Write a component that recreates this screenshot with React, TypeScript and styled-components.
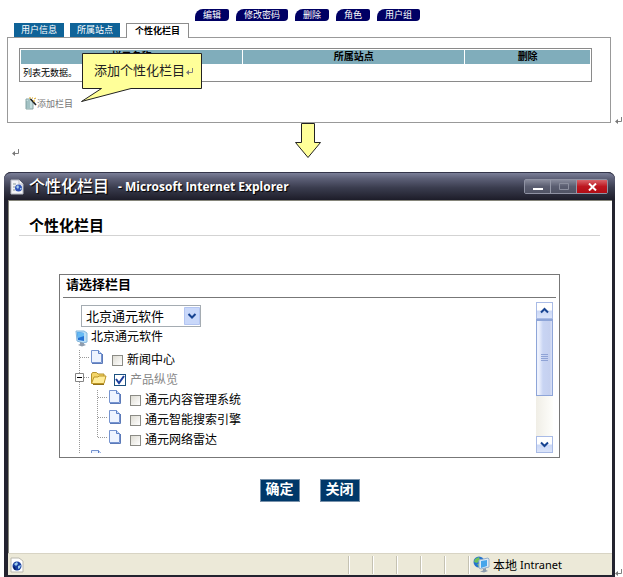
import React, { useState } from "react";
import styled, { createGlobalStyle, css } from "styled-components";

const sans = `"Liberation Sans", "Noto Sans CJK SC", sans-serif`;

const GlobalStyle = createGlobalStyle`
  *, *::before, *::after { box-sizing: border-box; }
  body { margin: 0; background: #fff; color: #000; font-family: ${sans}; }
  button, input, select { font-family: inherit; margin: 0; }
  ul { list-style: none; margin: 0; padding: 0; }
`;

const Page = styled.main`
  display: flex;
  flex-direction: column;
  padding-top: 9px;
  overflow: hidden;
`;

const ActionNav = styled.nav`
  display: flex;
  justify-content: center;
  gap: 7px;
  padding-right: 8px;
`;

const ActionButton = styled.button`
  height: 12px;
  padding: 0 8px;
  border: 0;
  border-radius: 8px 2px 4px 0;
  background: #000064;
  color: #fff;
  font-size: 9px;
  line-height: 12px;
  cursor: pointer;
`;

const MarkedRow = styled.div`
  display: flex;
  align-items: flex-end;
`;

const TabRow = styled.div`
  display: flex;
  align-items: flex-end;
  gap: 6px;
  padding: 0 7px;
  margin: 2px 12px 0 7px;
`;

const Tab = styled.button<{ $active?: boolean }>`
  height: 14px;
  padding: 0 7px;
  border: 0;
  background: #0f6398;
  color: #fff;
  font-size: 9px;
  line-height: 14px;
  cursor: pointer;
  ${(p) =>
    p.$active &&
    css`
      height: 15px;
      padding: 0 8px;
      margin-bottom: -1px;
      border: 1px solid #8c8c8c;
      border-bottom: 0;
      background: #fff;
      color: #000;
      font-weight: 700;
      line-height: 12px;
      z-index: 1;
    `}
`;

const UserPanel = styled.section`
  flex: 1;
  min-width: 0;
  margin-left: 7px;
  padding: 10px 18px 8px 11px;
  border: 1px solid #999;
`;

const ListTable = styled.table`
  width: 100%;
  table-layout: fixed;
  border: 1px solid #8a8a8a;
  border-collapse: separate;
  border-spacing: 1px;
  font-size: 9px;
`;

const HeadCell = styled.th<{ $width?: string }>`
  width: ${(p) => p.$width || "auto"};
  height: 14px;
  padding: 0;
  background: #80adbb;
  font-size: 10px;
  line-height: 12px;
`;

const BodyCell = styled.td`
  height: 15px;
  padding: 0 2px;
  line-height: 14px;
`;

const AddRow = styled.div`
  position: relative;
  margin: 14px 0 0 6px;
`;

const AddLink = styled.a`
  display: inline-flex;
  align-items: center;
  color: #777;
  font-size: 9px;
  line-height: 14px;
  text-decoration: none;
`;

const Callout = styled.div`
  position: absolute;
  left: 56px;
  bottom: 11px;
  width: 122px;
  height: 50px;
  svg {
    display: block;
  }
`;

const CalloutText = styled.p`
  position: absolute;
  inset: 8px 0 auto 13px;
  margin: 0;
  display: flex;
  align-items: center;
  gap: 1px;
  color: #222;
  font-size: 13px;
  line-height: 20px;
  white-space: nowrap;
`;

const MarkSlot = styled.span<{ $low?: boolean }>`
  flex: none;
  width: ${(p) => (p.$low ? 8 : 12)}px;
  display: flex;
  justify-content: flex-end;
  margin-bottom: ${(p) => (p.$low ? 0 : -2)}px;
`;

const ArrowRow = styled.div`
  display: flex;
  justify-content: center;
  height: 35px;
  padding-right: 8px;
`;

const ParagraphRow = styled.div`
  height: 24px;
  margin-top: -10px;
  padding-left: 12px;
  svg {
    display: block;
  }
`;

const BrowserWindow = styled.section`
  flex: 1;
  min-width: 0;
  margin-left: 4px;
  border: solid #23232f;
  border-width: 0 3px 2px 4px;
  border-radius: 7px 7px 0 0;
  background: #23232f;
`;

const TitleBar = styled.header`
  display: flex;
  align-items: center;
  height: 28px;
  margin: 0 -3px 0 -4px;
  padding: 0 7px 0 6px;
  border-top: 1px solid #34364a;
  border-radius: 7px 7px 0 0;
  background: linear-gradient(#7b7f98 0, #5d6077 20%, #3a3c4e 55%, #1d1d29 100%);
  color: #fff;
  text-shadow: 1px 1px 1px #000;
`;

const WindowTitle = styled.h1`
  flex: 1;
  display: flex;
  align-items: center;
  gap: 9px;
  margin: 0 0 0 5px;
  font-size: 16px;
  font-weight: 500;
  line-height: 24px;
  white-space: nowrap;
`;

const AppName = styled.span`
  font: 700 12px/24px "Open Sans", "Noto Sans", sans-serif;
`;

const WindowControls = styled.div`
  display: flex;
  border: 1px solid #8f92a3;
  border-radius: 2px;
`;

const WindowButton = styled.button<{ $close?: boolean }>`
  display: grid;
  place-items: center;
  width: ${(p) => (p.$close ? 30 : 26)}px;
  height: 13px;
  padding: 0;
  border: 0;
  border-right: ${(p) => (p.$close ? 0 : 1)}px solid #9497a7;
  background: ${(p) =>
    p.$close
      ? "linear-gradient(#d9646a, #bd1720 50%, #b10d15)"
      : "linear-gradient(#888b9c, #5a5d70 50%, #505364)"};
`;

const Viewport = styled.div`
  padding: 17px 12px 51px 10px;
  border: solid #85857a;
  border-width: 1px 0 0 1px;
  background: #fff;
`;

const PageHeading = styled.h2`
  margin: 0;
  padding: 0 0 0 10px;
  border-bottom: 1px solid #d3d3d3;
  font-size: 15px;
  line-height: 16px;
  height: 18px;
`;

const Picker = styled.section`
  margin: 38px 40px 0;
  padding: 0 3px 4px;
  border: 1px solid #777;
`;

const PickerTitle = styled.h3`
  margin: 0;
  padding: 0 3px 2px;
  border-bottom: 1px solid #777;
  font-size: 13px;
  line-height: 20px;
`;

const ScrollFrame = styled.div`
  display: flex;
  justify-content: space-between;
  height: 151px;
  margin-top: 4px;
  padding-right: 3px;
`;

const ScrollContent = styled.div`
  flex: 1;
  padding: 3px 0 0 8px;
  overflow: hidden;
`;

const SelectBox = styled.div`
  position: relative;
  width: 120px;
  margin-left: 10px;
  svg {
    position: absolute;
    top: 2px;
    right: 1px;
    pointer-events: none;
  }
`;

const Select = styled.select`
  display: block;
  width: 100%;
  height: 22px;
  padding: 0 20px 0 4px;
  appearance: none;
  border: 1px solid #a5acb2;
  border-radius: 0;
  background: #fff;
  color: #000;
  font-size: 13px;
`;

const RootRow = styled.div`
  display: flex;
  align-items: flex-start;
  gap: 3px;
  height: 23px;
  padding-left: 4px;
  font-size: 12px;
  line-height: 20px;
  svg {
    margin-top: 3px;
  }
`;

const TreeRow = styled.li`
  display: flex;
  align-items: center;
  height: 20px;
`;

const Guide = styled.svg`
  flex: none;
  display: block;
`;

const IconSlot = styled.span<{ $folder?: boolean }>`
  flex: none;
  align-self: flex-start;
  width: ${(p) => (p.$folder ? 25 : 23)}px;
  padding: ${(p) => (p.$folder ? 1 : 0)}px 0 0 1px;
  svg {
    display: block;
  }
`;

const CheckLabel = styled.label<{ $dim?: boolean }>`
  display: flex;
  align-items: center;
  gap: 4px;
  color: ${(p) => (p.$dim ? "#888" : "#000")};
  font-size: 12px;
  line-height: 20px;
  white-space: nowrap;
`;

const Check = styled.input`
  appearance: none;
  width: 11px;
  height: 11px;
  border: 1px solid #8b8b85;
  background: linear-gradient(135deg, #dedcd3, #fff);
  &:checked {
    width: 12px;
    height: 12px;
    border-color: #1c5180;
    background: #fff
      url("data:image/svg+xml,%3Csvg xmlns='http://www.w3.org/2000/svg' viewBox='0 0 10 10'%3E%3Cpath d='M1 4l3 4 5-7' fill='none' stroke='%231d3f9c' stroke-width='2'/%3E%3C/svg%3E");
  }
`;

const ScrollBar = styled.div`
  display: flex;
  flex-direction: column;
  width: 17px;
  background: linear-gradient(90deg, #f0eee6, #fefefb);
`;

const ScrollButton = styled.button`
  display: grid;
  place-items: center;
  height: 17px;
  padding: 0;
  border: 1px solid #a9bbe6;
  background: linear-gradient(#fff 0 45%, #cbd8f6 55%, #dce5fa);
`;

const ScrollThumb = styled.div`
  display: grid;
  place-items: center;
  height: 77px;
  margin-bottom: auto;
  border: 1px solid #8ea5d8;
  border-top-width: 2px;
  background: linear-gradient(90deg, #eef2fd 0 12%, #c8d4f3 40%, #c5d0ef 85%, #dae2f8);
`;

const DialogActions = styled.div`
  display: flex;
  justify-content: center;
  gap: 20px;
  margin-top: 21px;
`;

const DialogButton = styled.button`
  width: 40px;
  height: 23px;
  padding: 0 0 3px;
  border: 1px solid #7891aa;
  background: #003869;
  color: #fff;
  font-size: 14px;
  font-weight: 700;
  line-height: 18px;
`;

const StatusBar = styled.footer`
  display: flex;
  align-items: center;
  height: 22px;
  padding-left: 2px;
  border-top: 1px solid #d8d4c4;
  background: #ece9d8;
  font-size: 12px;
`;

const StatusMain = styled.div`
  flex: 1;
  display: flex;
`;

const StatusCell = styled.div`
  width: 24px;
  height: 18px;
  border-left: 1px solid #c5c2b2;
  box-shadow: inset 1px 0 #fff;
`;

const StatusZone = styled.div`
  display: flex;
  align-items: center;
  gap: 3px;
  width: 144px;
  height: 18px;
  padding-left: 4px;
  border-left: 1px solid #c5c2b2;
  box-shadow: inset 1px 0 #fff;
  font-family: "Noto Sans", "Noto Sans CJK SC", sans-serif;
  font-size: 11px;
  white-space: nowrap;
`;

const ZoneName = styled.span`
  font-size: 12px;
`;

const ReturnMark = () => (
  <svg width="8" height="9" viewBox="0 0 8 9" fill="none" aria-hidden="true">
    <path d="M6.500 1v4.500H2" stroke="#808080" />
    <path d="M0 5.500L3 3v5z" fill="#777" />
  </svg>
);

const AddIcon = () => (
  <svg width="12" height="13" viewBox="0 0 12 13" aria-hidden="true">
    <path d="M1 2h5l2 2v8H1z" fill="#c5dede" stroke="#87a5a5" />
    <path d="M2 4v7M4 3v8" stroke="#658f96" strokeWidth=".7" />
    <path d="M5.500 2l5.500 6" stroke="#222" strokeWidth="1.600" />
    <path d="M4 1h2M7 1h1M9 2l2-1M8 4h2" stroke="#dba51d" />
  </svg>
);

const PageIcon = () => (
  <svg width="14" height="16" viewBox="0 0 14 16" aria-hidden="true">
    <path d="M1 1h8l4 4v10H1z" fill="#f2f3f6" stroke="#b4b7c1" />
    <path d="M9 1v4h4" fill="#fff" stroke="#b8bac4" />
    <path d="M3 5h3M3 8h2M3 11h2" stroke="#899" />
    <circle cx="8.500" cy="9" r="3.500" fill="#3155b7" />
    <path d="M6 8l2-2 1 2-1 2zM10 9l2 0-2 2z" fill="#a8ceed" />
  </svg>
);

const GlobeIcon = () => (
  <svg width="14" height="16" viewBox="0 0 14 16" aria-hidden="true">
    <path d="M1 1h8l4 3v11H1z" fill="#fff" stroke="#bbb9b0" />
    <circle cx="7" cy="9" r="4.500" fill="#163d9f" />
    <path d="M4 7l3-2 1 2-2 2zM8 9l3-1-1 3-2 1z" fill="#9dccec" />
    <path d="M3 9l2 1 1 3-2-1z" fill="#071e61" />
  </svg>
);

const FileIcon = () => (
  <svg width="13" height="14" viewBox="0 0 13 14" aria-hidden="true">
    <path d="M1.500.500h7l3 3v9h-10z" fill="#eef4ff" stroke="#7694d0" />
    <path d="M8.500.500v3h3" fill="#cbdcf8" stroke="#5a7fc5" />
    <path d="M2 13.500h10.500V4" fill="none" stroke="#5c7ab8" />
  </svg>
);

const FolderIcon = () => (
  <svg width="17" height="15" viewBox="0 0 17 15" aria-hidden="true">
    <path d="M1.500 12V3l1-1.500h4L8 3h6v3" fill="#f4d568" stroke="#b5932b" />
    <path d="M1.500 12.500L4 6h4l1-1h7l-2 7.500z" fill="#ffec98" stroke="#bc9526" />
    <path d="M3 13.500h11" stroke="#927018" />
  </svg>
);

const ComputerIcon = () => (
  <svg width="13" height="17" viewBox="0 0 13 17" aria-hidden="true">
    <path d="M1 1l8 0 3 2v9l-4 1-6-2z" fill="#b9def6" stroke="#83b6dc" />
    <path d="M2 2l7 1v8l-6-1z" fill="#2472d4" />
    <path d="M2 2l7 1v3L3 8z" fill="#65baf4" />
    <path d="M5 12l4 1v1l2 1-4 1.500-4-1.500 2-1z" fill="#8f9dae" />
  </svg>
);

const NetworkIcon = () => (
  <svg width="17" height="17" viewBox="0 0 17 17" aria-hidden="true">
    <circle cx="6" cy="6" r="5.500" fill="#2674ce" />
    <path d="M2 3l4-2 1 3-3 3-3-1zM4 8l3 0-1 3z" fill="#6fc25c" />
    <path d="M6 4l9-2 1 1v8l-8 2-2-1z" fill="#dceaf6" stroke="#94afca" />
    <path d="M8 5l6-1v6l-6 2z" fill="#45a5ea" />
    <path d="M10 13l3-1v2l2 1-4 1.500-4-1 3-1z" fill="#8b9bad" />
  </svg>
);

const Chevron = ({ up }: { up?: boolean }) => (
  <svg width="9" height="7" viewBox="0 0 9 7" aria-hidden="true">
    <path d={up ? "M1 5.500l3.500-3.500L8 5.500" : "M1 1.500L4.500 5 8 1.500"} fill="none" stroke="#174391" strokeWidth="2" />
  </svg>
);

type GuideKind = "line" | "tee" | "last" | "box";

const TreeGuide = ({ kind }: { kind: GuideKind }) => (
  <Guide width="18" height="20" viewBox="0 0 18 20" fill="none" aria-hidden="true">
    <path d={kind === "last" ? "M8.500 0v8" : "M8.500 0v20"} stroke="#999" strokeDasharray="1 1" />
    {kind !== "line" && <path d="M9 7.500h9" stroke="#999" strokeDasharray="1 1" />}
    {kind === "box" && (
      <>
        <path d="M4.500 3.500h8v8h-8z" fill="#fff" stroke="#858585" />
        <path d="M6 7.500h5" stroke="#000" />
      </>
    )}
  </Guide>
);

interface TreeItem {
  label?: string;
  guides: GuideKind[];
  folder?: boolean;
}

const treeItems: TreeItem[] = [
  { label: "新闻中心", guides: ["tee"] },
  { label: "产品纵览", guides: ["box"], folder: true },
  { label: "通元内容管理系统", guides: ["line", "tee"] },
  { label: "通元智能搜索引擎", guides: ["line", "tee"] },
  { label: "通元网络雷达", guides: ["line", "last"] },
  { guides: ["tee"] },
];

const actions = ["编辑", "修改密码", "删除", "角色", "用户组"];
const tabs = ["用户信息", "所属站点", "个性化栏目"];

function UserAdmin() {
  return (
    <>
      <ActionNav>
        {actions.map((name) => (
          <ActionButton key={name}>{name}</ActionButton>
        ))}
      </ActionNav>
      <TabRow role="tablist">
        {tabs.map((name, i) => (
          <Tab key={name} role="tab" aria-selected={i === 2} $active={i === 2}>
            {name}
          </Tab>
        ))}
      </TabRow>
      <MarkedRow>
        <UserPanel>
          <ListTable>
            <thead>
              <tr>
                <HeadCell>栏目名称</HeadCell>
                <HeadCell>所属站点</HeadCell>
                <HeadCell $width="22%">删除</HeadCell>
              </tr>
            </thead>
            <tbody>
              <tr>
                <BodyCell colSpan={3}>列表无数据。</BodyCell>
              </tr>
            </tbody>
          </ListTable>
          <AddRow>
            <AddLink href="#add">
              <AddIcon />
              添加栏目
            </AddLink>
            <Callout>
              <svg width="122" height="50" viewBox="0 0 122 50" aria-hidden="true">
                <path d="M1.500.500h119v35H50L.500 48.500l20-13h-19z" fill="#ffff99" stroke="#222" />
              </svg>
              <CalloutText>
                添加个性化栏目
                <ReturnMark />
              </CalloutText>
            </Callout>
          </AddRow>
        </UserPanel>
        <MarkSlot>
          <ReturnMark />
        </MarkSlot>
      </MarkedRow>
    </>
  );
}

function ColumnTree() {
  const [checked, setChecked] = useState<Record<string, boolean>>({ 产品纵览: true });
  return (
    <ul>
      {treeItems.map((item, row) => (
        <TreeRow key={row}>
          {item.guides.map((kind, i) => (
            <TreeGuide key={i} kind={kind} />
          ))}
          <IconSlot $folder={item.folder}>{item.folder ? <FolderIcon /> : <FileIcon />}</IconSlot>
          {item.label && (
            <CheckLabel $dim={item.folder}>
              <Check
                type="checkbox"
                checked={!!checked[item.label]}
                onChange={(e) => setChecked({ ...checked, [item.label as string]: e.target.checked })}
              />
              {item.label}
            </CheckLabel>
          )}
        </TreeRow>
      ))}
    </ul>
  );
}

function ColumnDialog() {
  return (
    <BrowserWindow>
      <TitleBar>
        <PageIcon />
        <WindowTitle>
          个性化栏目 <AppName>- Microsoft Internet Explorer</AppName>
        </WindowTitle>
        <WindowControls>
          <WindowButton aria-label="最小化">
            <svg width="10" height="9">
              <path d="M0 7h10" stroke="#fff" strokeWidth="2" />
            </svg>
          </WindowButton>
          <WindowButton aria-label="最大化">
            <svg width="10" height="7">
              <path d="M.500.500h9v6h-9z" fill="none" stroke="#8b8e9e" />
            </svg>
          </WindowButton>
          <WindowButton $close aria-label="关闭窗口">
            <svg width="9" height="8">
              <path d="M1 .500l7 7M8 .500l-7 7" stroke="#fff" strokeWidth="2" />
            </svg>
          </WindowButton>
        </WindowControls>
      </TitleBar>
      <Viewport>
        <PageHeading>个性化栏目</PageHeading>
        <Picker>
          <PickerTitle>请选择栏目</PickerTitle>
          <ScrollFrame>
            <ScrollContent>
              <SelectBox>
                <Select aria-label="站点">
                  <option>北京通元软件</option>
                </Select>
                <svg width="16" height="18" viewBox="0 0 16 18" aria-hidden="true">
                  <path d="M.500.500h15v17H.500z" fill="#c9d8fa" stroke="#b3c5f2" />
                  <path d="M4.500 7L8 10.500 11.500 7" fill="none" stroke="#174391" strokeWidth="2" />
                </svg>
              </SelectBox>
              <RootRow>
                <ComputerIcon />
                北京通元软件
              </RootRow>
              <ColumnTree />
            </ScrollContent>
            <ScrollBar>
              <ScrollButton aria-label="向上滚动">
                <Chevron up />
              </ScrollButton>
              <ScrollThumb>
                <svg width="7" height="8" aria-hidden="true">
                  <path d="M0 .500h7M0 2.500h7M0 4.500h7M0 6.500h7" stroke="#8fa3d6" />
                </svg>
              </ScrollThumb>
              <ScrollButton aria-label="向下滚动">
                <Chevron />
              </ScrollButton>
            </ScrollBar>
          </ScrollFrame>
        </Picker>
        <DialogActions>
          <DialogButton>确定</DialogButton>
          <DialogButton>关闭</DialogButton>
        </DialogActions>
      </Viewport>
      <StatusBar>
        <StatusMain>
          <GlobeIcon />
        </StatusMain>
        <StatusCell />
        <StatusCell />
        <StatusCell />
        <StatusCell />
        <StatusCell />
        <StatusZone>
          <NetworkIcon />
          <ZoneName>本地</ZoneName> Intranet
        </StatusZone>
      </StatusBar>
    </BrowserWindow>
  );
}

export default function App() {
  return (
    <Page>
      <GlobalStyle />
      <UserAdmin />
      <ArrowRow>
        <svg width="28" height="36" viewBox="0 0 28 36" aria-hidden="true">
          <path d="M7.500.500h13v19h6L14 34.500 1.500 19.500h6z" fill="#ffff99" stroke="#222" />
        </svg>
      </ArrowRow>
      <ParagraphRow>
        <ReturnMark />
      </ParagraphRow>
      <MarkedRow>
        <ColumnDialog />
        <MarkSlot $low>
          <ReturnMark />
        </MarkSlot>
      </MarkedRow>
    </Page>
  );
}
